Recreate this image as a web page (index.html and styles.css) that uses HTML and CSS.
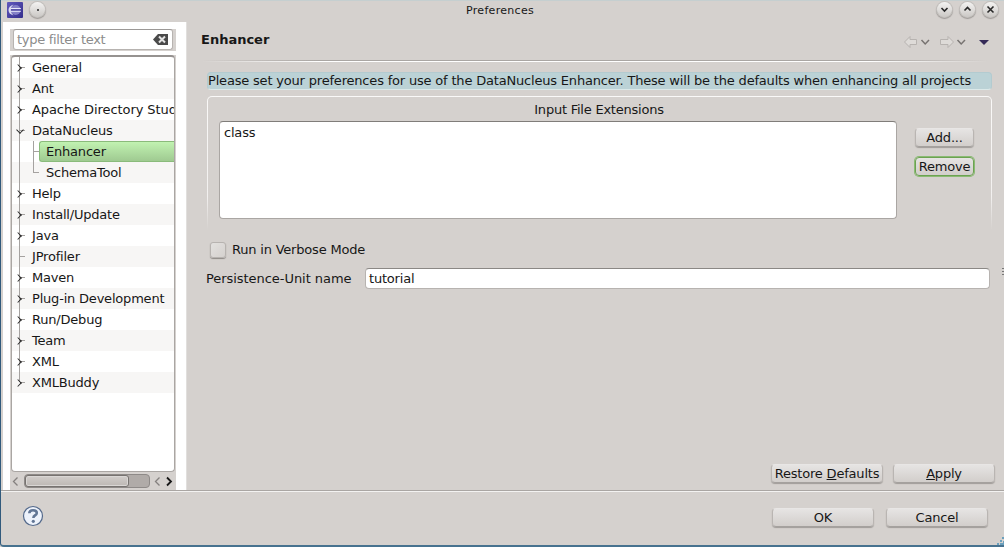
FILE: index.html
```html
<!DOCTYPE html>
<html lang="en">
<head>
<meta charset="utf-8">
<title>Preferences</title>
<link rel="stylesheet" href="styles.css">
</head>
<body>
<div class="window">
  <header class="titlebar">
    <svg class="app-icon" width="16" height="16" viewBox="0 0 16 16"><defs><linearGradient id="ec" x2="1" y2="1"><stop offset="0" stop-color="#6058bd"/><stop offset="1" stop-color="#352e8c"/></linearGradient></defs><rect width="16" height="16" rx="1" fill="url(#ec)"/><circle cx="8.700" cy="8" r="5" fill="#8580c8"/><path d="M6.500 2.500Q1.500 4 1.500 8t5 5.500Q3.800 11.500 3.800 8t2.700-5.500" fill="#dcdcf2"/><path d="M4 6.500h9.800M4 9.300h9.800" stroke="#e9e9fa" stroke-width="1"/><path d="M4 7.900h10" stroke="#4f489f" stroke-width="1.300"/></svg>
    <span class="round menu-dot"><i></i></span>
    <h1>Preferences</h1>
    <span class="round"><svg width="15" height="15" viewBox="0 0 15 15"><path d="M4.500 6l3 3 3-3"/></svg></span>
    <span class="round"><svg width="15" height="15" viewBox="0 0 15 15"><path d="M4.500 8.500l3-3 3 3"/></svg></span>
    <span class="round"><svg width="15" height="15" viewBox="0 0 15 15"><path d="M4.500 4.500l6 6m0-6l-6 6"/></svg></span>
  </header>
  <div class="body">
    <aside>
      <div class="filter"><div class="field"><span class="hint">type filter text</span><svg width="15" height="11" viewBox="0 0 15 11"><path d="M0 5.500L5 0h10v11H5z" fill="#4a4a4a"/><path d="M6 2.500l6 6m0-6l-6 6" stroke="#e4e4e4" stroke-width="2"/></svg></div></div>
      <div class="panel">
        <ul class="tree">
          <li><b class="arrow"></b><span>General</span></li>
          <li><b class="arrow"></b><span>Ant</span></li>
          <li><b class="arrow"></b><span class="long">Apache Directory Studio</span></li>
          <li><b class="arrow open"></b><span>DataNucleus</span></li>
          <li class="child"><b class="elbow"></b><span class="selected">Enhancer</span></li>
          <li class="child last"><b class="elbow"></b><span>SchemaTool</span></li>
          <li><b class="arrow"></b><span>Help</span></li>
          <li><b class="arrow"></b><span>Install/Update</span></li>
          <li><b class="arrow"></b><span>Java</span></li>
          <li><b class="arrow leaf"></b><span>JProfiler</span></li>
          <li><b class="arrow"></b><span>Maven</span></li>
          <li><b class="arrow"></b><span>Plug-in Development</span></li>
          <li><b class="arrow"></b><span>Run/Debug</span></li>
          <li><b class="arrow"></b><span>Team</span></li>
          <li><b class="arrow"></b><span>XML</span></li>
          <li class="end"><b class="arrow"></b><span>XMLBuddy</span></li>
        </ul>
        <div class="scroll">
          <svg width="12" height="14" viewBox="0 0 12 14"><path class="dim" d="M6.500 2.500l-4 4 4 4"/></svg>
          <div class="track"><div class="thumb"></div></div>
          <svg width="24" height="14" viewBox="0 0 24 14"><path class="dim" d="M9.500 2.500l-4 4 4 4"/><path class="lit" d="M17 2.500l4 4-4 4"/></svg>
        </div>
      </div>
    </aside>
    <main>
      <div class="heading"><h2>Enhancer</h2>
        <svg width="88" height="14" viewBox="0 0 88 14"><g fill="#dedbd8" stroke="#b7b3b0"><path d="M1.500 7L7 1.500v3h6.500v5H7v3z"/><path d="M50.500 7L45 1.500v3h-7.500v5H45v3z"/></g><g fill="none" stroke="#777371" stroke-width="1.500"><path d="M18.500 5l3.700 4L26 5M54.500 5l3.700 4L62 5"/></g><path d="M76 5h10l-5 5z" fill="#352a57"/></svg>
      </div>
      <div class="rule"></div>
      <div class="message"><span>Please set your preferences for use of the DataNucleus Enhancer. These will be the defaults when enhancing all projects</span></div>
      <section class="group">
        <h3>Input File Extensions</h3>
        <div class="columns"><div class="list">class</div>
          <div class="actions"><button class="small">Add...</button><button class="small focused">Remove</button></div></div>
      </section>
      <label class="check"><i></i><span>Run in Verbose Mode</span></label>
      <div class="unit"><label>Persistence-Unit name</label><div class="input">tutorial</div></div>
      <div class="page-actions"><button class="restore">Restore <u>D</u>efaults</button><button><u>A</u>pply</button></div>
    </main>
    <div class="edge-mark"></div>
  </div>
  <footer>
    <svg width="22" height="22" viewBox="0 0 22 22"><circle cx="11" cy="11" r="9.500" fill="#edf2fb" stroke="#53698b" stroke-width="1.200"/><path d="M7.300 8.200q0-3 3.700-3 3.800 0 3.800 2.800 0 1.500-1.900 2.500-1.500.8-1.500 2.500" fill="none" stroke="#627695" stroke-width="2.600"/><circle cx="11.300" cy="16.300" r="1.600" fill="#627695"/></svg>
    <div class="dialog-actions"><button>OK</button><button>Cancel</button></div>
    <svg class="grip" width="7" height="8" viewBox="0 0 7 8"><path d="M5 0h2v2H5zM3 3h2v2H3zM6 4h1v4H3V6h3zM0 6h2v2H0z" fill="#6ba0bd"/></svg>
  </footer>
</div>
</body>
</html>
```
FILE: styles.css
```css
* { box-sizing: border-box; }
body { margin: 0; background: #d5d1ce; color: #171717; font: 13px/20px "DejaVu Sans", sans-serif; letter-spacing: -.2px; overflow: hidden; }
h1, h2, h3, ul { margin: 0; padding: 0; font-weight: normal; }
.window { height: 547px; width: 1004px; display: flex; flex-direction: column; border-left: 1px solid #315a7c; border-bottom: 2px solid #47728f; border-bottom-left-radius: 4px; background: #d5d1ce; }
.titlebar { height: 22px; display: flex; padding: 2px 6px 0 6px; border-top: 1px solid #c5cfd0; flex: none; }
.app-icon { margin-top: -1px; }
.titlebar h1 { flex: 1; font-size: 11px; line-height: 15px; letter-spacing: .3px; text-align: center; padding-left: 26px; }
.round { width: 15px; height: 15px; margin: -1px 0 0 8px; border-radius: 50%; background: linear-gradient(#f4f3f2, #cbc8c5); box-shadow: 0 0 0 1px #c3c0bd, 0 1px 1px 1px #9d9996; }
.menu-dot { margin-left: 7px; }
.round svg { display: block; fill: none; stroke: #282828; stroke-width: 1.6; }
.menu-dot { display: flex; align-items: center; justify-content: center; }
.menu-dot i { width: 2px; height: 2px; background: #555; }
.body { display: flex; height: 468px; }
aside { width: 185px; flex: none; background: #fff; padding: 7px 10px 0 7px; border-left: 2px solid #d5d1ce; }
.filter { height: 22px; background: #d5d1ce; padding: 0 3px 1px 3px; }
.field { height: 21px; border: 1px solid #b7b3b0; border-top-color: #9b9896; border-radius: 3px; background: #fff; display: flex; justify-content: space-between; align-items: center; padding: 0 4px 0 3px; color: #8c8c8c; letter-spacing: -.3px; }
.panel { margin-top: 4px; height: 435px; background: #d5d1ce; padding: 0 1px; }
.tree { height: 417px; list-style: none; border: 1px solid #aaa6a3; border-top: 2px solid #969290; border-radius: 4px; background: #fff; overflow: hidden; }
.tree li { height: 21px; display: flex; white-space: nowrap; background: linear-gradient(#a5a2a0, #a5a2a0) 7px 0 / 1px 100% no-repeat; line-height: 21px; }
.tree li:nth-child(even) { background-color: #f7f6f5; }
.tree li.end { background-size: 1px 10px; }
.long { letter-spacing: -.08px; }
.arrow { width: 20px; flex: none; background: linear-gradient(#a5a2a0, #a5a2a0) 8px 10px / 5px 1px no-repeat; }
.arrow::before { content: ""; display: block; width: 5px; height: 5px; margin: 8px 0 0 3px; border: solid #222; border-width: 1.5px 1.5px 0 0; transform: rotate(45deg) scale(.9); }
.arrow.open::before { transform: rotate(135deg) scale(.9); margin-left: 5px; margin-top: 7px; }
.arrow.leaf::before { display: none; }
.elbow { width: 27px; flex: none; background: linear-gradient(#a5a2a0, #a5a2a0) 21px 0 / 1px 100% no-repeat, linear-gradient(#a5a2a0, #a5a2a0) 21px 10px / 6px 1px no-repeat; }
.last .elbow { background-size: 1px 10px, 6px 1px; }
.child span { padding-left: 7px; }
.child .selected { flex: 1; padding-left: 6px; border: 1px solid #8abb7b; border-right: 0; border-radius: 3px 0 0 3px; background: linear-gradient(#c1f2b1, #9fca91); line-height: 19px; }
.scroll { height: 18px; display: flex; padding-top: 2px; }
.scroll svg { display: block; margin-top: 1px; fill: none; }
.dim { stroke: #85817f; stroke-width: 1.3; }
.lit { stroke: #181818; stroke-width: 1.8; }
.track { width: 126px; height: 14px; margin-left: 1px; border: 1px solid #8e8a88; border-radius: 4px; background: #b0aba8; }
.thumb { width: 104px; height: 12px; border: 1px solid #777370; border-radius: 3px; background: linear-gradient(#d1cdca, #bdb8b4); box-shadow: inset 0 0 0 1px #dad7d5; }
main { width: 812px; flex: none; padding: 8px 0 0 15px; border-left: 1px solid #e1dfdd; }
.heading { height: 30px; display: flex; justify-content: space-between; padding-right: 7px; }
.heading h2 { font-size: 13px; font-weight: bold; letter-spacing: 0; line-height: 19px; margin-left: -1px; }
.heading svg { margin-top: 5px; }
.rule { height: 2px; margin-right: 11px; background: linear-gradient(90deg, #d5d1ce, #aaa6a3 15%, #aaa6a3 85%, #d5d1ce) top / 100% 1px no-repeat, linear-gradient(90deg, #d5d1ce, #fff 15%, #fff 85%, #d5d1ce) bottom / 100% 1px no-repeat; }
.message { width: 785px; height: 18px; margin: 10px 0 0 5px; border: 1px solid #b3cbd0; border-bottom-color: #dce9e9; border-radius: 4px; background: #bbd2d6; line-height: 16px; letter-spacing: -.187px; white-space: nowrap; }
.group { width: 785px; height: 134px; margin: 6px 0 0 5px; border: 1px solid transparent; border-bottom: 0; border-radius: 5px 5px 0 0; background: linear-gradient(#d5d1ce, #d5d1ce) padding-box, linear-gradient(#faf9f8, #f2f0ef 75%, #d5d1ce) border-box; padding: 2px 17px 0 11px; }
.group h3 { font-size: 13px; text-align: center; line-height: 21px; height: 22px; padding-left: 5px; letter-spacing: -.23px; }
.columns { display: flex; justify-content: space-between; }
.list { width: 678px; height: 98px; border: 1px solid #aaa6a3; border-top-color: #807d7a; border-radius: 4px; background: #fff; padding: 1px 4px; }
.actions { padding-top: 7px; display: flex; flex-direction: column; gap: 10px; }
button { font: inherit; letter-spacing: inherit; color: inherit; width: 102px; height: 19px; padding: 0; border: 1px solid #b9b5b2; border-top-color: #e8e6e5; border-bottom-color: #a5a19e; border-radius: 4px; background: linear-gradient(#e6e4e3, #d2cecb); box-shadow: 0 1px 1px #a09c99; line-height: 17px; white-space: nowrap; }
.small { width: 59px; }
.focused { border-color: #6ca252; box-shadow: 0 0 0 1px #8abb73; }
.check { display: flex; height: 20px; margin: 10px 0 0 8px; }
.check i { width: 16px; height: 16px; margin: 2px 6px 0 0; border: 1px solid #b7b3b0; border-radius: 3px; background: linear-gradient(135deg, #e3e1df, #d5d1ce); box-shadow: 0 1px 1px #8e8a87; }
.unit { display: flex; height: 21px; margin: 8px 8px 0 4px; justify-content: space-between; }
.unit label { letter-spacing: -.05px; line-height: 22px; }
.input { width: 625px; border: 1px solid #b7b3b0; border-top-color: #8b8885; border-radius: 4px; background: #fff; padding-left: 3px; line-height: 19px; letter-spacing: -.2px; }
.page-actions { display: flex; justify-content: flex-end; gap: 10px; padding: 175px 3px 0 0; }
.restore { width: 112px; }
.edge-mark { width: 2px; height: 9px; margin: 246px 0 0 4px; background: repeating-linear-gradient(#777 0 1px, #d5d1ce 1px 3px); }
footer { height: 55px; display: flex; justify-content: space-between; border-top: 1px solid #aaa6a3; box-shadow: inset 0 1px #f3f2f1; padding: 14px 0 0 21px; }
.dialog-actions { display: flex; gap: 12px; margin: 3px 9px 0 auto; }
.grip { align-self: flex-end; }
```
